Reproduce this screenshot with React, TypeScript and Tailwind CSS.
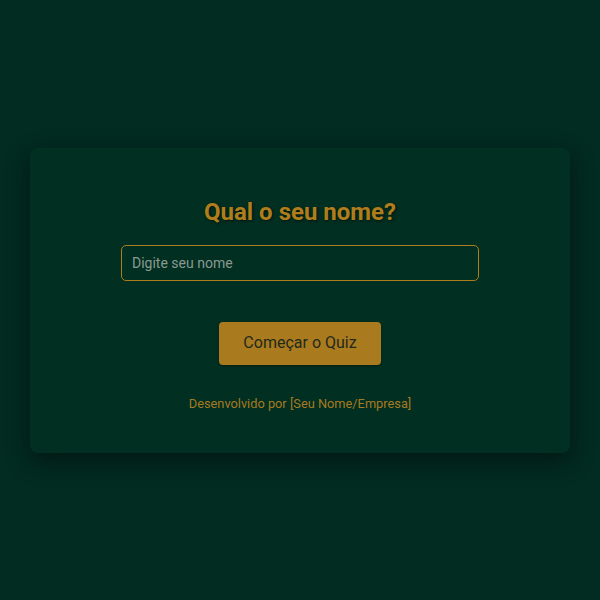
export default function App() {
  return (
    <div className="min-h-screen w-full bg-[#022b21] flex items-center justify-center" style={{ fontFamily: "Roboto, 'Noto Sans', sans-serif" }}>
      <div className="w-[540px] h-[305px] rounded-lg bg-[#012f21] shadow-[0_8px_24px_rgba(0,0,0,0.45)] flex flex-col items-center pt-[48px]">
        <h1 className="text-[24px] leading-[32px] font-bold text-[#b07d1c] [text-shadow:1px_1px_3px_rgba(0,0,0,0.6)]">Qual o seu nome?</h1>
        <input
          type="text"
          placeholder="Digite seu nome"
          className="mt-[17px] w-[358px] h-[36px] rounded-[5px] border border-[#b07d1c] bg-transparent px-[10px] text-[14px] text-[#c9c9c9] placeholder:text-[#8a9a92] outline-none"
        />
        <button className="mt-[41px] w-[162px] h-[43px] rounded-[4px] bg-[#aa7a1f] text-[16px] text-[#1e2a1c] shadow-[0_1px_3px_rgba(0,0,0,0.3)]">Começar o Quiz</button>
        <p className="mt-[31px] text-[12.8px] leading-[16px] text-[#a67a22]">Desenvolvido por [Seu Nome/Empresa]</p>
      </div>
    </div>
  );
}
